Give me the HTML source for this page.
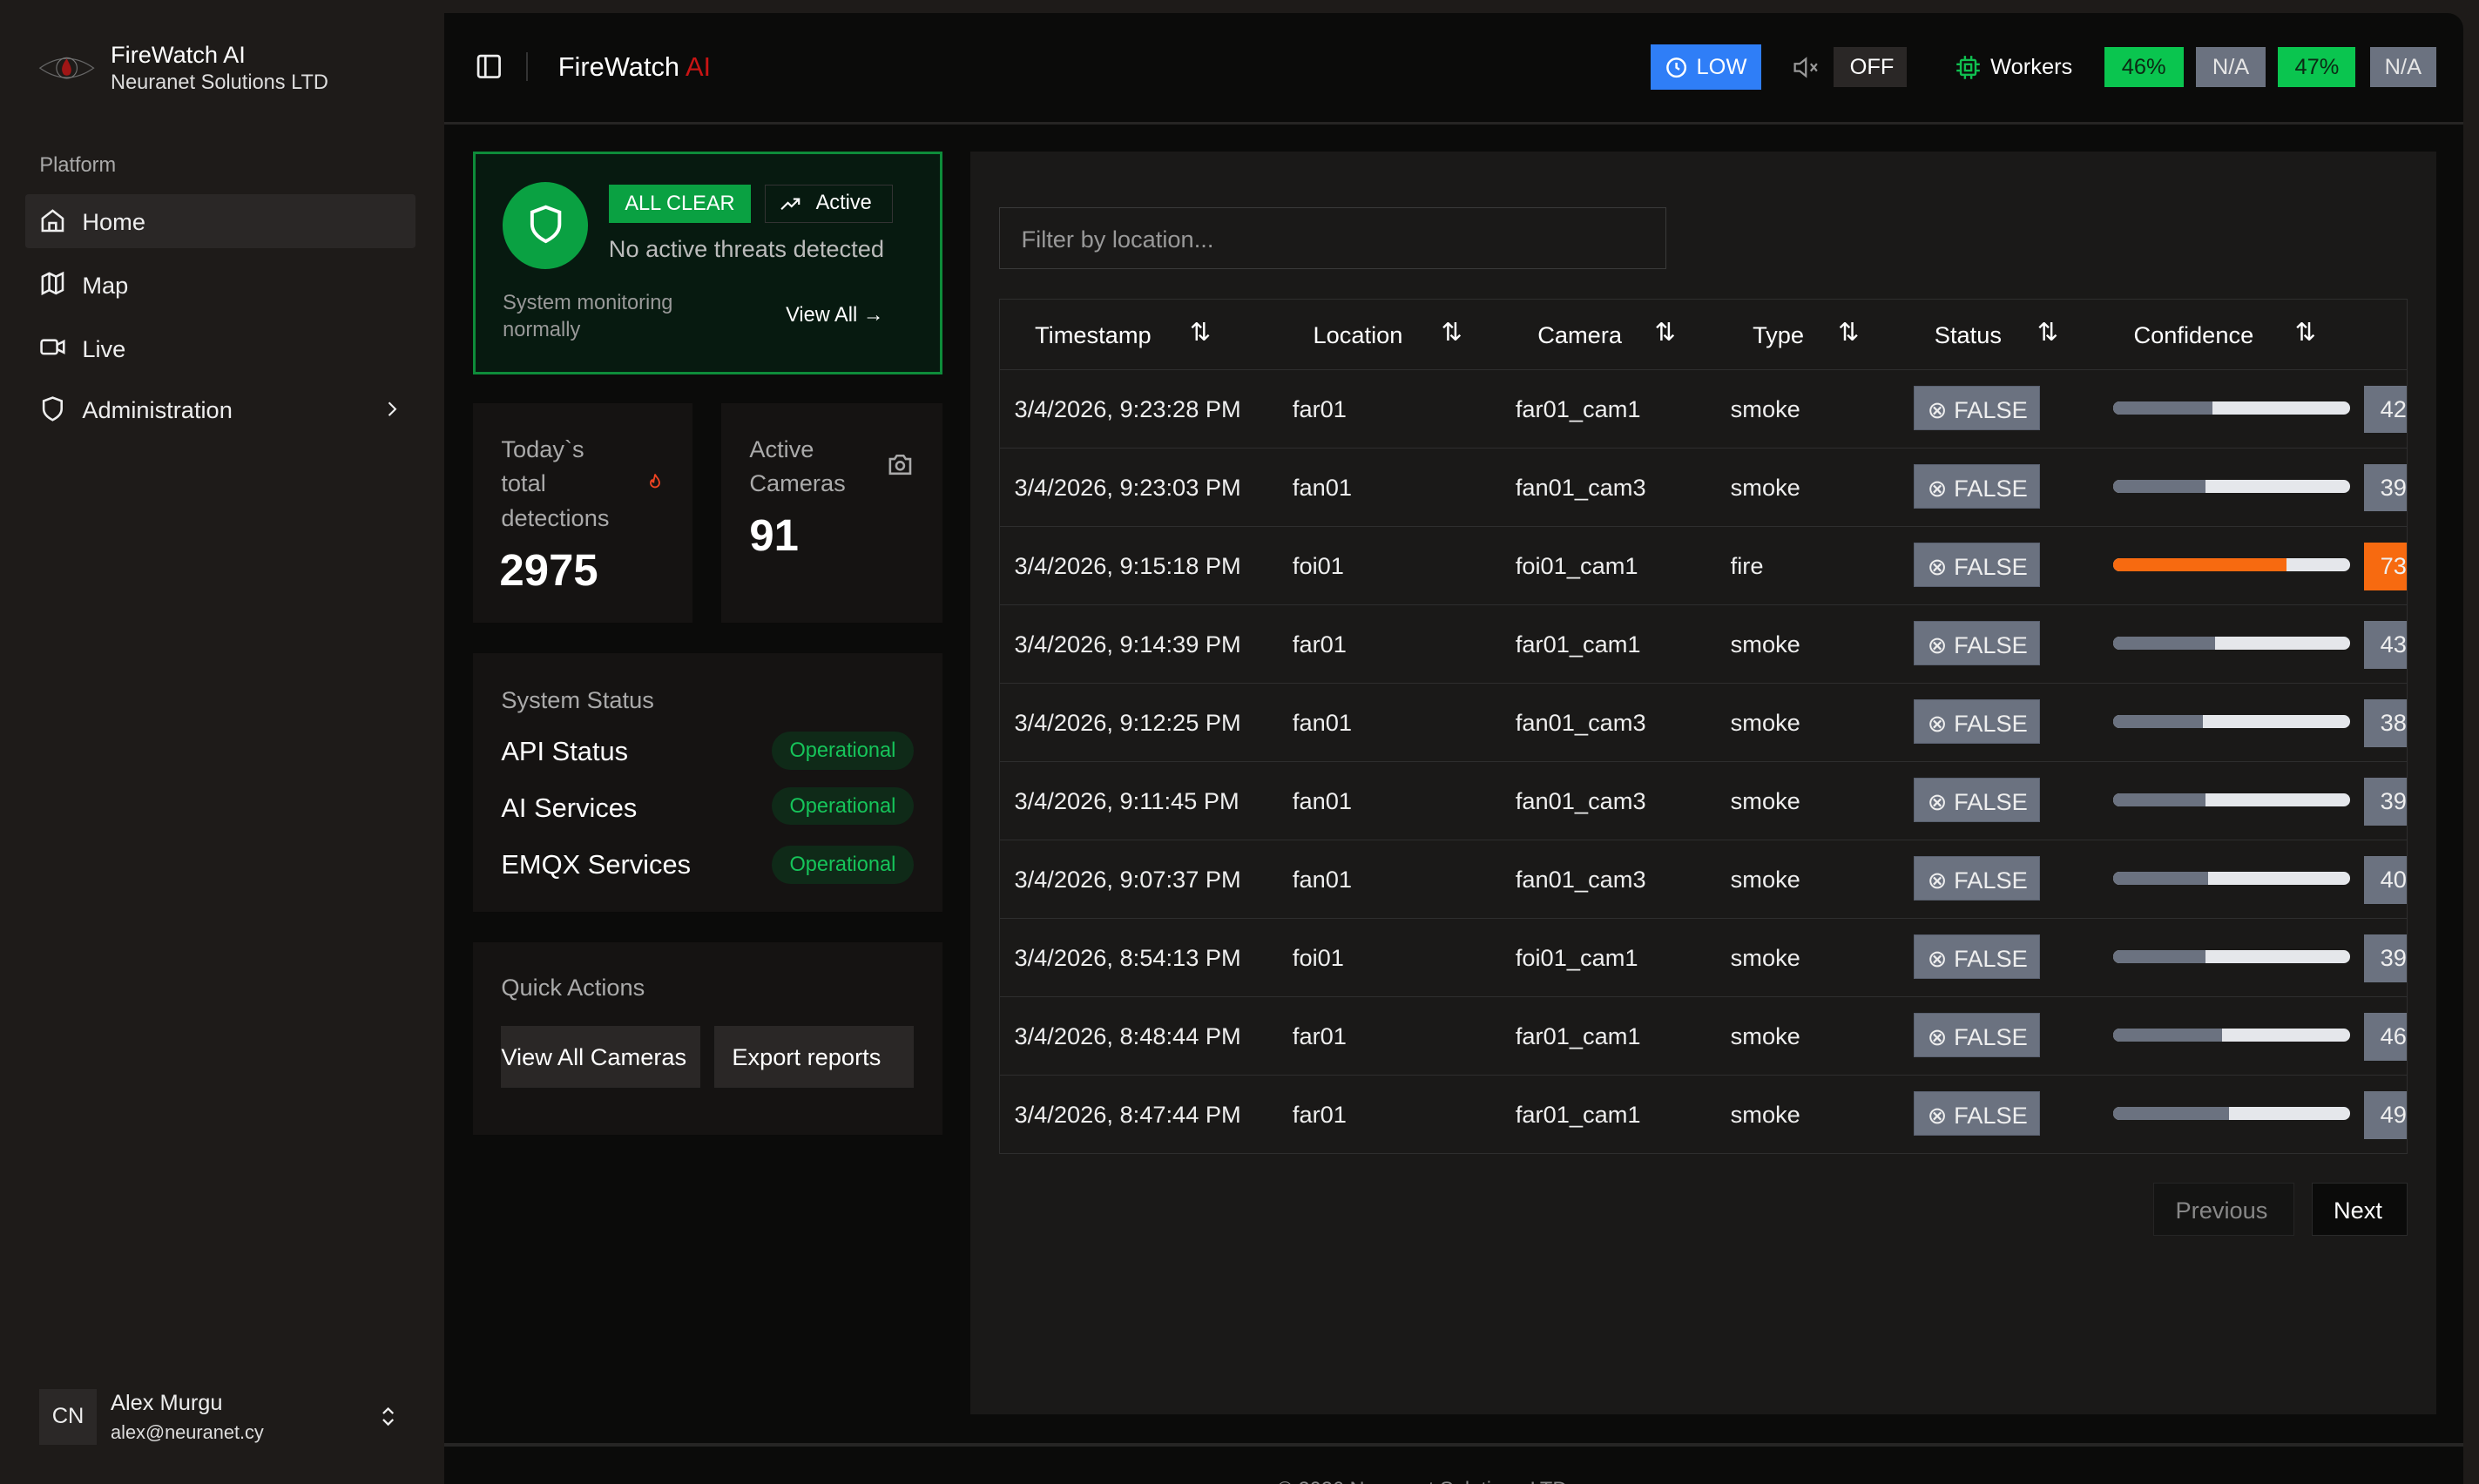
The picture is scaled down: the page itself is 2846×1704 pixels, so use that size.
<!DOCTYPE html>
<html><head><meta charset="utf-8">
<style>
html,body{margin:0;padding:0;}
body{width:2846px;height:1704px;overflow:hidden;background:#1e1b19;font-family:"Liberation Sans",sans-serif;}
#r{position:absolute;left:0;top:0;width:1568px;height:939px;zoom:1.81505;color:#eee;overflow:hidden;background:#1e1b19;}
.a{position:absolute;}
.t{position:absolute;white-space:nowrap;line-height:1;}
.card{position:absolute;background:#151312;}
.row{position:absolute;left:0;width:891px;height:49.6px;border-top:1px solid #2e2e2e;}
.row .t{top:17px;font-size:15px;color:#eee;}
.fb{position:absolute;left:578px;top:10px;width:80px;height:28px;background:#6b7280;border:1px solid #5a6170;box-sizing:border-box;color:#fff;font-size:13px;}
.bar{position:absolute;left:704px;top:20px;width:150px;height:8px;border-radius:4px;background:#e5e7eb;overflow:hidden;}
.bar i{display:block;height:100%;background:#6b7280;}
.num{position:absolute;left:863px;top:10px;width:28px;height:30px;background:#6b7280;color:#fff;font-size:14px;}
.op{position:absolute;left:488px;width:90px;height:24px;border-radius:12px;background:#0f2a18;color:#16c45a;font-size:13px;text-align:center;line-height:24px;}
</style></head><body>
<div id="r">
<svg class="a" style="left:24px;top:33px" width="36" height="20" viewBox="0 0 36 20"><path d="M1 10 Q18 -2 35 10 Q18 22 1 10Z" fill="none" stroke="#666" stroke-width="0.7"/><circle cx="18" cy="10" r="6.5" fill="none" stroke="#777" stroke-width="0.6"/><path d="M18 4 C15 8 14 11 16 14 C17 15 19 15 20 14 C22 11 20 8 18 4Z" fill="#a01616"/></svg>
<div class="t" style="left:70px;top:27px;font-size:15px;color:#fff">FireWatch AI</div>
<div class="t" style="left:70px;top:46px;font-size:13px;color:#ddd">Neuranet Solutions LTD</div>
<div class="t" style="left:25px;top:98px;font-size:13px;color:#aaa">Platform</div>
<div class="a" style="left:16px;top:123px;width:247px;height:34px;background:#2a2726;border-radius:2px"></div>
<svg class="a" style="left:25px;top:131px" width="17" height="17" viewBox="0 0 24 24" fill="none" stroke="#eee" stroke-width="2"><path d="M3 10l9-7 9 7v11H3z"/><path d="M9 21v-7h6v7"/></svg>
<div class="t" style="left:52px;top:133px;font-size:15px">Home</div>
<svg class="a" style="left:25px;top:171px" width="17" height="17" viewBox="0 0 24 24" fill="none" stroke="#eee" stroke-width="2"><path d="M3 6l6-3 6 3 6-3v15l-6 3-6-3-6 3z"/><path d="M9 3v15M15 6v15"/></svg>
<div class="t" style="left:52px;top:173px;font-size:15px">Map</div>
<svg class="a" style="left:25px;top:211px" width="17" height="17" viewBox="0 0 24 24" fill="none" stroke="#eee" stroke-width="2"><rect x="2" y="6" width="14" height="12" rx="2"/><path d="M16 10l6-3v10l-6-3"/></svg>
<div class="t" style="left:52px;top:213px;font-size:15px">Live</div>
<svg class="a" style="left:25px;top:250px" width="17" height="17" viewBox="0 0 24 24" fill="none" stroke="#eee" stroke-width="2"><path d="M12 2l8 3v7c0 5-4 8-8 10-4-2-8-5-8-10V5z"/></svg>
<div class="t" style="left:52px;top:252px;font-size:15px">Administration</div>
<svg class="a" style="left:241px;top:252px" width="14" height="14" viewBox="0 0 24 24" fill="none" stroke="#eee" stroke-width="2"><path d="M9 5l7 7-7 7"/></svg>
<div class="a" style="left:25px;top:879px;width:36px;height:35px;background:#2b2827;color:#eee;font-size:14px;text-align:center;line-height:35px">CN</div>
<div class="t" style="left:70px;top:881px;font-size:14px">Alex Murgu</div>
<div class="t" style="left:70px;top:900px;font-size:12px;color:#ddd">alex@neuranet.cy</div>
<svg class="a" style="left:238px;top:888px" width="15" height="16" viewBox="0 0 24 24" fill="none" stroke="#eee" stroke-width="2"><path d="M7 9l5-5 5 5M7 15l5 5 5-5"/></svg>

<div class="a" style="left:281px;top:8px;width:1277px;height:940px;background:#0b0b0a;border-top-right-radius:10px"></div>
<div class="a" style="left:281px;top:77px;width:1277px;height:2px;background:#262524"></div>
<div class="a" style="left:281px;top:913px;width:1277px;height:2px;background:#262524"></div>
<div class="t" style="left:808px;top:936px;font-size:13px;color:#888">© 2026 Neuranet Solutions LTD</div>
<svg class="a" style="left:300px;top:33px" width="18" height="18" viewBox="0 0 24 24" fill="none" stroke="#eee" stroke-width="2"><rect x="3" y="3" width="18" height="18" rx="2"/><path d="M9 3v18"/></svg>
<div class="a" style="left:333px;top:33px;width:1px;height:18px;background:#333"></div>
<div class="t" style="left:353px;top:34px;font-size:17px;color:#fff">FireWatch <span style="color:#c81414">AI</span></div>

<div class="a" style="left:1044px;top:28px;width:70px;height:29px;background:#2f7ef7"></div>
<svg class="a" style="left:1053px;top:35px" width="15" height="15" viewBox="0 0 24 24" fill="none" stroke="#fff" stroke-width="2.2"><circle cx="12" cy="12" r="9"/><path d="M12 7v5l3 2"/></svg>
<div class="t" style="left:1073px;top:36px;font-size:14px;color:#fff">LOW</div>
<svg class="a" style="left:1133px;top:34px" width="19" height="17" viewBox="0 0 24 22" fill="none" stroke="#999" stroke-width="1.6"><path d="M3 8h4l5-4v14l-5-4H3z"/><path d="M16 8l5 6M21 8l-5 6"/></svg>
<div class="a" style="left:1160px;top:30px;width:46px;height:25px;background:#2a2726"></div>
<div class="t" style="left:1170px;top:36px;font-size:14px;color:#fff">OFF</div>
<svg class="a" style="left:1237px;top:34px" width="16" height="17" viewBox="0 0 24 24" fill="none" stroke="#10c050" stroke-width="2"><rect x="5" y="5" width="14" height="14" rx="1"/><rect x="9" y="9" width="6" height="6"/><path d="M9 1v4M15 1v4M9 19v4M15 19v4M1 9h4M1 15h4M19 9h4M19 15h4"/></svg>
<div class="t" style="left:1259px;top:36px;font-size:14px;color:#fff">Workers</div>
<div class="a" style="left:1331px;top:30px;width:50px;height:25px;background:#0ac54f;color:#0b2a14;font-size:14px;text-align:center;line-height:26px">46%</div>
<div class="a" style="left:1389px;top:30px;width:44px;height:25px;background:#6b7280;color:#e5e5e5;font-size:14px;text-align:center;line-height:26px">N/A</div>
<div class="a" style="left:1441px;top:30px;width:49px;height:25px;background:#0ac54f;color:#0b2a14;font-size:14px;text-align:center;line-height:26px">47%</div>
<div class="a" style="left:1499px;top:30px;width:42px;height:25px;background:#6b7280;color:#e5e5e5;font-size:14px;text-align:center;line-height:26px">N/A</div>

<div class="a" style="left:299px;top:96px;width:297px;height:141px;box-sizing:border-box;border:2px solid #0e8c3a;background:#071a10"></div>
<div class="a" style="left:318px;top:115px;width:54px;height:55px;border-radius:50%;background:#0aa142"></div>
<svg class="a" style="left:332px;top:128px" width="26" height="28" viewBox="0 0 24 24" fill="none" stroke="#fff" stroke-width="2"><path d="M12 2l8 3v7c0 5-4 8-8 10-4-2-8-5-8-10V5z"/></svg>
<div class="a" style="left:385px;top:117px;width:90px;height:24px;background:#0aa142;color:#fff;font-size:13px;text-align:center;line-height:24px">ALL CLEAR</div>
<div class="a" style="left:484px;top:117px;width:81px;height:24px;box-sizing:border-box;border:1px solid #333;"></div>
<svg class="a" style="left:493px;top:123px" width="14" height="12" viewBox="0 0 24 20" fill="none" stroke="#fff" stroke-width="2"><path d="M2 16l7-7 4 4 8-8M15 5h6v6"/></svg>
<div class="t" style="left:516px;top:122px;font-size:13px;color:#fff">Active</div>
<div class="t" style="left:385px;top:150px;font-size:15px;color:#bbb">No active threats detected</div>
<div class="t" style="left:318px;top:183px;font-size:13px;color:#999;line-height:17px;white-space:normal;width:140px">System monitoring normally</div>
<div class="t" style="left:497px;top:193px;font-size:13px;color:#fff">View All →</div>

<div class="card" style="left:299px;top:255px;width:139px;height:139px"></div>
<div class="t" style="left:317px;top:273px;font-size:15px;color:#aaa;line-height:22px">Today`s<br>total<br>detections</div>
<svg class="a" style="left:409px;top:298px" width="11" height="13" viewBox="0 0 24 24" fill="none" stroke="#ef4422" stroke-width="2.2"><path d="M12 2c1 4 6 6 6 12a6 6 0 0 1-12 0c0-3 2-4 2-4 0 2 1 3 2 3 0-4 2-7 2-11z"/></svg>
<div class="t" style="left:316px;top:347px;font-size:28px;font-weight:bold;color:#fff">2975</div>
<div class="card" style="left:456px;top:255px;width:140px;height:139px"></div>
<div class="t" style="left:474px;top:273px;font-size:15px;color:#aaa;line-height:22px">Active<br>Cameras</div>
<svg class="a" style="left:561px;top:286px" width="17" height="16" viewBox="0 0 24 22" fill="none" stroke="#aaa" stroke-width="2"><path d="M3 6h4l2-3h6l2 3h4v13H3z"/><circle cx="12" cy="12" r="3.5"/></svg>
<div class="t" style="left:474px;top:325px;font-size:28px;font-weight:bold;color:#fff">91</div>

<div class="card" style="left:299px;top:413px;width:297px;height:164px"></div>
<div class="t" style="left:317px;top:435px;font-size:15px;color:#aaa">System Status</div>
<div class="t" style="left:317px;top:467px;font-size:17px;color:#fff">API Status</div>
<div class="op" style="top:463px">Operational</div>
<div class="t" style="left:317px;top:503px;font-size:17px;color:#fff">AI Services</div>
<div class="op" style="top:498px">Operational</div>
<div class="t" style="left:317px;top:539px;font-size:17px;color:#fff">EMQX Services</div>
<div class="op" style="top:535px">Operational</div>

<div class="card" style="left:299px;top:596px;width:297px;height:122px"></div>
<div class="t" style="left:317px;top:617px;font-size:15px;color:#aaa">Quick Actions</div>
<div class="a" style="left:317px;top:649px;width:126px;height:39px;background:#2a2726"></div>
<div class="t" style="left:317px;top:661px;font-size:15px;color:#fff">View All Cameras</div>
<div class="a" style="left:452px;top:649px;width:126px;height:39px;background:#2a2726"></div>
<div class="t" style="left:463px;top:661px;font-size:15px;color:#fff">Export reports</div>

<div class="a" style="left:614px;top:96px;width:927px;height:799px;background:#1a1918"></div>
<div class="a" style="left:632px;top:131px;width:422px;height:39px;box-sizing:border-box;border:1px solid #3a3a3a"></div>
<div class="t" style="left:646px;top:144px;font-size:15px;color:#999">Filter by location...</div>

<div class="a" id="tb" style="left:632px;top:189px;width:891px;height:541px;box-sizing:border-box;border:1px solid #2e2e2e;overflow:hidden">
<div class="t" style="left:22px;top:15px;font-size:15px;color:#fff">Timestamp</div><div class="t" style="left:120px;top:13px;font-size:16px;color:#fff">⇅</div>
<div class="t" style="left:198px;top:15px;font-size:15px;color:#fff">Location</div><div class="t" style="left:279px;top:13px;font-size:16px;color:#fff">⇅</div>
<div class="t" style="left:340px;top:15px;font-size:15px;color:#fff">Camera</div><div class="t" style="left:414px;top:13px;font-size:16px;color:#fff">⇅</div>
<div class="t" style="left:476px;top:15px;font-size:15px;color:#fff">Type</div><div class="t" style="left:530px;top:13px;font-size:16px;color:#fff">⇅</div>
<div class="t" style="left:591px;top:15px;font-size:15px;color:#fff">Status</div><div class="t" style="left:656px;top:13px;font-size:16px;color:#fff">⇅</div>
<div class="t" style="left:717px;top:15px;font-size:15px;color:#fff">Confidence</div><div class="t" style="left:819px;top:13px;font-size:16px;color:#fff">⇅</div>

<div class="row" style="top:44px"><div class="t" style="left:9px">3/4/2026, 9:23:28 PM</div><div class="t" style="left:185px">far01</div><div class="t" style="left:326px">far01_cam1</div><div class="t" style="left:462px">smoke</div><div class="fb"><span class="t" style="left:8px;top:7px">⊗ FALSE</span></div><div class="bar"><i style="width:42%"></i></div><div class="num"><span class="t" style="left:10px;top:7px">42</span></div></div>
<div class="row" style="top:93.6px"><div class="t" style="left:9px">3/4/2026, 9:23:03 PM</div><div class="t" style="left:185px">fan01</div><div class="t" style="left:326px">fan01_cam3</div><div class="t" style="left:462px">smoke</div><div class="fb"><span class="t" style="left:8px;top:7px">⊗ FALSE</span></div><div class="bar"><i style="width:39%"></i></div><div class="num"><span class="t" style="left:10px;top:7px">39</span></div></div>
<div class="row" style="top:143.2px"><div class="t" style="left:9px">3/4/2026, 9:15:18 PM</div><div class="t" style="left:185px">foi01</div><div class="t" style="left:326px">foi01_cam1</div><div class="t" style="left:462px">fire</div><div class="fb"><span class="t" style="left:8px;top:7px">⊗ FALSE</span></div><div class="bar"><i style="width:73%;background:#f76a10"></i></div><div class="num" style="background:#f76a10"><span class="t" style="left:10px;top:7px">73</span></div></div>
<div class="row" style="top:192.8px"><div class="t" style="left:9px">3/4/2026, 9:14:39 PM</div><div class="t" style="left:185px">far01</div><div class="t" style="left:326px">far01_cam1</div><div class="t" style="left:462px">smoke</div><div class="fb"><span class="t" style="left:8px;top:7px">⊗ FALSE</span></div><div class="bar"><i style="width:43%"></i></div><div class="num"><span class="t" style="left:10px;top:7px">43</span></div></div>
<div class="row" style="top:242.4px"><div class="t" style="left:9px">3/4/2026, 9:12:25 PM</div><div class="t" style="left:185px">fan01</div><div class="t" style="left:326px">fan01_cam3</div><div class="t" style="left:462px">smoke</div><div class="fb"><span class="t" style="left:8px;top:7px">⊗ FALSE</span></div><div class="bar"><i style="width:38%"></i></div><div class="num"><span class="t" style="left:10px;top:7px">38</span></div></div>
<div class="row" style="top:292px"><div class="t" style="left:9px">3/4/2026, 9:11:45 PM</div><div class="t" style="left:185px">fan01</div><div class="t" style="left:326px">fan01_cam3</div><div class="t" style="left:462px">smoke</div><div class="fb"><span class="t" style="left:8px;top:7px">⊗ FALSE</span></div><div class="bar"><i style="width:39%"></i></div><div class="num"><span class="t" style="left:10px;top:7px">39</span></div></div>
<div class="row" style="top:341.6px"><div class="t" style="left:9px">3/4/2026, 9:07:37 PM</div><div class="t" style="left:185px">fan01</div><div class="t" style="left:326px">fan01_cam3</div><div class="t" style="left:462px">smoke</div><div class="fb"><span class="t" style="left:8px;top:7px">⊗ FALSE</span></div><div class="bar"><i style="width:40%"></i></div><div class="num"><span class="t" style="left:10px;top:7px">40</span></div></div>
<div class="row" style="top:391.2px"><div class="t" style="left:9px">3/4/2026, 8:54:13 PM</div><div class="t" style="left:185px">foi01</div><div class="t" style="left:326px">foi01_cam1</div><div class="t" style="left:462px">smoke</div><div class="fb"><span class="t" style="left:8px;top:7px">⊗ FALSE</span></div><div class="bar"><i style="width:39%"></i></div><div class="num"><span class="t" style="left:10px;top:7px">39</span></div></div>
<div class="row" style="top:440.8px"><div class="t" style="left:9px">3/4/2026, 8:48:44 PM</div><div class="t" style="left:185px">far01</div><div class="t" style="left:326px">far01_cam1</div><div class="t" style="left:462px">smoke</div><div class="fb"><span class="t" style="left:8px;top:7px">⊗ FALSE</span></div><div class="bar"><i style="width:46%"></i></div><div class="num"><span class="t" style="left:10px;top:7px">46</span></div></div>
<div class="row" style="top:490.4px"><div class="t" style="left:9px">3/4/2026, 8:47:44 PM</div><div class="t" style="left:185px">far01</div><div class="t" style="left:326px">far01_cam1</div><div class="t" style="left:462px">smoke</div><div class="fb"><span class="t" style="left:8px;top:7px">⊗ FALSE</span></div><div class="bar"><i style="width:49%"></i></div><div class="num"><span class="t" style="left:10px;top:7px">49</span></div></div>
</div>

<div class="a" style="left:1362px;top:748px;width:89px;height:34px;box-sizing:border-box;border:1px solid #252525;background:#141413"></div>
<div class="t" style="left:1376px;top:758px;font-size:15px;color:#888">Previous</div>
<div class="a" style="left:1462px;top:748px;width:61px;height:34px;box-sizing:border-box;border:1px solid #2a2a2a;background:#0b0b0a"></div>
<div class="t" style="left:1476px;top:758px;font-size:15px;color:#fff">Next</div>
</div>
</body></html>
